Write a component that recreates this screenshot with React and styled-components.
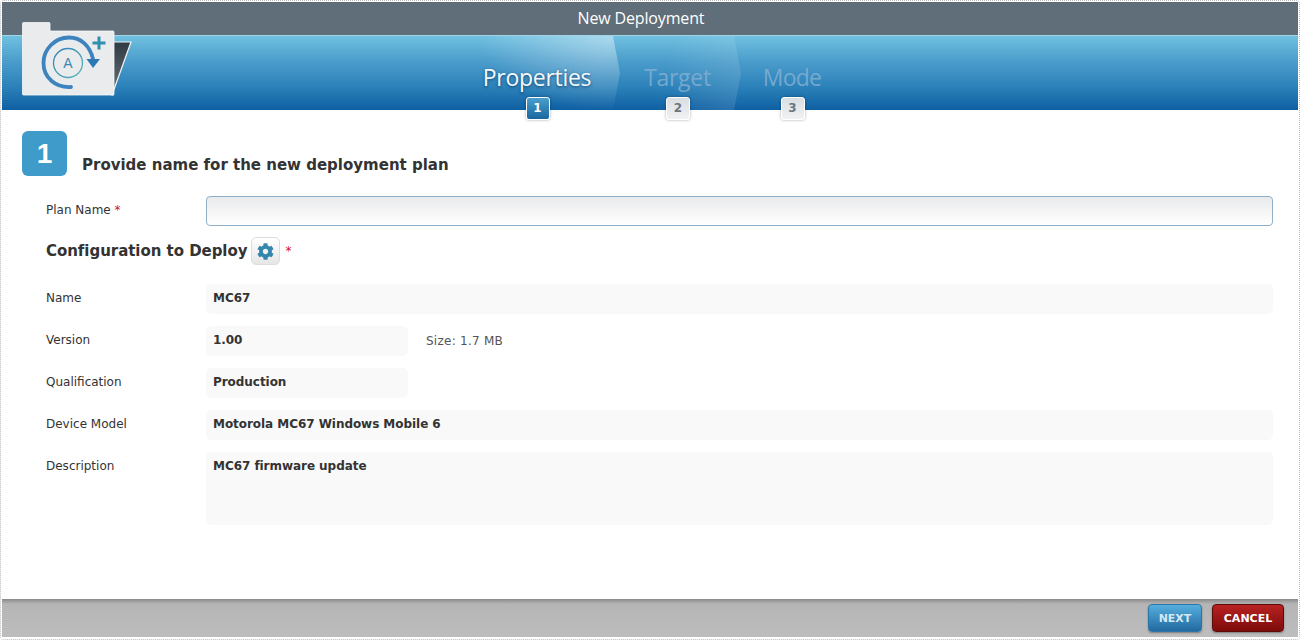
import React from 'react'
import styled, { createGlobalStyle } from 'styled-components';
import { FaCog } from 'react-icons/fa';

const GlobalStyle = createGlobalStyle`
  html, body {
    margin: 0;
    padding: 0;
    background: #fff;
  }
  body {
    font-family: "DejaVu Sans", Verdana, sans-serif;
    font-size: 12px;
    color: #333;
  }
`;

const steps = [
  { label: 'Properties', width: 160, state: 'active' },
  { label: 'Target', width: 127, state: 'next' },
  { label: 'Mode', width: 114, state: 'last' },
];

const rows = [
  { label: 'Name', value: 'MC67' },
  { label: 'Version', value: '1.00', short: true, note: 'Size: 1.7 MB' },
  { label: 'Qualification', value: 'Production', short: true },
  { label: 'Device Model', value: 'Motorola MC67 Windows Mobile 6' },
  { label: 'Description', value: 'MC67 firmware update', tall: true },
];

function FolderLogo() {
  return (
    <LogoSvg viewBox="0 0 112 76" width="112" height="76">
      <defs>
        <linearGradient id="flap" x1="0" y1="0" x2="0" y2="1">
          <stop offset="0" stopColor="#2f3a44" />
          <stop offset="1" stopColor="#6c7378" />
        </linearGradient>
        <linearGradient id="ring" x1="0" y1="0" x2="1" y2="1">
          <stop offset="0" stopColor="#2f7fb8" />
          <stop offset="1" stopColor="#5bb8b4" />
        </linearGradient>
      </defs>
      <path d="M91 20 L109 20 L90 73 L91 73 Z" fill="url(#flap)" stroke="#f2f4f5" strokeWidth="1.2" />
      <path d="M0.5 1.5 Q0.5 0.5 1.5 0.5 L27 0.5 Q28 0.5 28 1.5 L28 9 L91 9 Q92 9 92 10 L92 72 Q92 73 91 73 L1.5 73 Q0.5 73 0.5 72 Z" fill="#e9ebed" stroke="#f6f7f8" strokeWidth="0.8" />
      <path d="M49 65 C34 66 21.5 56 21.5 41 C21.5 27 33 15.5 47 15.5 C59 15.5 68 24 71 37" fill="none" stroke="#3d83bd" strokeWidth="3.8" strokeLinecap="round" />
      <path d="M64.5 37 L78 37 L71 46 Z" fill="#2b78b4" />
      <circle cx="46" cy="41" r="14.5" fill="none" stroke="url(#ring)" strokeWidth="1.3" />
      <text x="46" y="46" textAnchor="middle" fontSize="14" fontFamily="Liberation Sans, sans-serif" fill="#3a87b5">A</text>
      <path d="M70.5 21 H83.5 M77 14.5 V27.5" stroke="#2f8fb0" strokeWidth="3" fill="none" />
    </LogoSvg>
  )
}

function App() {
  return (
    <Page>
      <GlobalStyle />
      <TitleBar>New Deployment</TitleBar>
      <Banner>
        <FolderLogo />
        <Steps>
          {steps.map((step, i) => (
            <Step key={step.label} $width={step.width} $state={step.state}>
              <StepLabel $state={step.state}>
                {step.label}
                <StepBadge $state={step.state}>{i + 1}</StepBadge>
              </StepLabel>
            </Step>
          ))}
        </Steps>
      </Banner>
      <Content>
        <Heading>
          <NumberTile>1</NumberTile>
          <HeadingText>Provide name for the new deployment plan</HeadingText>
        </Heading>
        <PlanRow>
          <Label>Plan Name <Req>*</Req></Label>
          <PlanInput />
        </PlanRow>
        <ConfigHeading>
          <ConfigTitle>Configuration to Deploy</ConfigTitle>
          <GearButton><FaCog size={17} /></GearButton>
          <Req>*</Req>
        </ConfigHeading>
        <Rows>
          {rows.map(row => (
            <Row key={row.label}>
              <RowLabel>{row.label}</RowLabel>
              <Value $short={row.short} $tall={row.tall}>{row.value}</Value>
              {row.note && <Note>{row.note}</Note>}
            </Row>
          ))}
        </Rows>
      </Content>
      <Footer>
        <NextButton>NEXT</NextButton>
        <CancelButton>CANCEL</CancelButton>
      </Footer>
    </Page>
  )
}

export default App

const stepFills = {
  active: 'radial-gradient(ellipse 135px 75px at 96% 0%, rgba(255,255,255,0.42), rgba(255,255,255,0.14) 65%, rgba(255,255,255,0) 100%)',
  next: 'linear-gradient(100deg, rgba(255,255,255,0) 40%, rgba(255,255,255,0.12))',
  last: 'none',
};

const Page = styled.div`
  box-sizing: border-box;
  width: 1300px;
  height: 640px;
  padding: 1px 1px 2px 1px;
  border: 1px dotted #bbb;
  border-radius: 4px;
  display: flex;
  flex-direction: column;
  overflow: hidden;
`;

const TitleBar = styled.div`
  height: 33px;
  flex: none;
  padding-right: 18px;
  background: #5f6e79;
  color: #fff;
  font-family: "Open Sans", sans-serif;
  font-size: 16px;
  letter-spacing: -0.15px;
  line-height: 32px;
  text-align: center;
`;

const Banner = styled.div`
  position: relative;
  flex: none;
  height: 75px;
  box-sizing: border-box;
  border-top: 1px solid #9fd3e8;
  background: linear-gradient(to bottom, #70c0e0 0%, #4a9ccb 35%, #2a80b8 70%, #0f5fa3 100%);
  padding-left: 458px;
`;

const LogoSvg = styled.svg`
  position: absolute;
  left: 20px;
  top: -14px;
`;

const Steps = styled.div`
  display: flex;
  height: 100%;
`;

const Step = styled.div`
  position: relative;
  width: ${p => p.$width}px;
  margin-right: -6px;
  display: flex;
  justify-content: center;
  padding-right: ${p => (p.$state === 'active' ? 6 : 0)}px;
  box-sizing: border-box;

  &::before {
    content: '';
    position: absolute;
    inset: 0;
    background: ${p => stepFills[p.$state]};
    clip-path: polygon(0 0, calc(100% - 7px) 0, 100% 50%, calc(100% - 7px) 100%, 0 100%);
  }
`;

const StepLabel = styled.span`
  position: relative;
  align-self: flex-start;
  font-family: "Open Sans", sans-serif;
  font-size: 23px;
  line-height: 30px;
  margin-top: 26px;
  letter-spacing: ${p => (p.$state === 'last' ? '-0.8px' : '-0.3px')};
  color: ${p => (p.$state === 'active' ? '#f2fafd' : 'rgba(130,175,210,0.85)')};
  text-shadow: ${p => (p.$state === 'active' ? '0 1px 3px rgba(0,40,80,0.7)' : 'none')};
`;

const StepBadge = styled.span`
  position: absolute;
  left: 50%;
  top: 35px;
  margin-left: -11.5px;
  width: 24px;
  height: 23px;
  box-sizing: border-box;
  border-radius: 3px;
  border: 1px solid #fff;
  box-shadow: 0 0 3px rgba(0,0,0,0.35);
  font-family: "DejaVu Sans", Verdana, sans-serif;
  font-size: 12px;
  font-weight: bold;
  letter-spacing: 0;
  line-height: 21px;
  text-align: center;
  text-shadow: none;
  color: ${p => (p.$state === 'active' ? '#fff' : '#6b7680')};
  background: ${p => (p.$state === 'active' ? 'linear-gradient(#4a9fcb, #1a669f)' : 'linear-gradient(#d8dee3, #f1f2f3)')};
`;

const Content = styled.div`
  flex: 1;
  padding: 21px 25px 0 20px;
`;

const Heading = styled.div`
  display: flex;
  align-items: flex-end;
  gap: 15px;
`;

const NumberTile = styled.div`
  width: 45px;
  height: 45px;
  border-radius: 6px;
  background: #3f9bc9;
  color: #fff;
  font-family: "Liberation Sans", sans-serif;
  font-size: 28px;
  font-weight: bold;
  line-height: 45px;
  text-align: center;
`;

const HeadingText = styled.h2`
  margin: 0 0 1px;
  font-size: 15px;
  font-weight: 600;
  line-height: 20px;
  color: #333;
`;

const PlanRow = styled.div`
  display: flex;
  align-items: center;
  margin-top: 20px;
  padding-left: 24px;
  height: 30px;
`;

const Label = styled.label`
  width: 160px;
  flex: none;
  padding-bottom: 2px;
`;

const Req = styled.span`
  color: #d0112b;
`;

const PlanInput = styled.input`
  flex: 1;
  height: 30px;
  box-sizing: border-box;
  border: 1px solid #8fb0c8;
  border-radius: 4px;
  background: linear-gradient(#e9eaeb, #fff);
  outline: none;
`;

const ConfigHeading = styled.div`
  display: flex;
  align-items: center;
  margin-top: 10px;
  padding-left: 24px;
  height: 30px;
`;

const ConfigTitle = styled.h3`
  margin: 0 4px 0 0;
  font-size: 15px;
  font-weight: bold;
  letter-spacing: -0.04px;
  color: #333;
`;

const GearButton = styled.button`
  width: 29px;
  height: 28px;
  padding: 0;
  margin-right: 5px;
  border: 1px solid #ddd;
  border-radius: 5px;
  background: linear-gradient(#fff, #e6e6e6);
  color: #3585ad;
  display: flex;
  align-items: center;
  justify-content: center;
`;

const Rows = styled.div`
  margin-top: 18px;
  padding-left: 24px;
  display: flex;
  flex-direction: column;
  gap: 12px;
`;

const Row = styled.div`
  display: flex;
  align-items: flex-start;
`;

const RowLabel = styled.div`
  width: 160px;
  flex: none;
  line-height: 28px;
`;

const Value = styled.div`
  box-sizing: border-box;
  ${p => (p.$short ? 'width: 202px;' : 'flex: 1;')}
  height: ${p => (p.$tall ? 73 : 30)}px;
  padding: 0 7px;
  border-radius: 5px;
  background: #f9f9f9;
  font-weight: bold;
  letter-spacing: -0.05px;
  line-height: 28px;
`;

const Note = styled.div`
  margin-left: 18px;
  letter-spacing: 0.25px;
  color: #555;
  line-height: 30px;
`;

const Footer = styled.div`
  flex: none;
  height: 38px;
  box-sizing: border-box;
  padding: 5px 14px 0 0;
  display: flex;
  justify-content: flex-end;
  gap: 10px;
  background: linear-gradient(#8a8a8a 0, #b5b5b5 5px, #bdbdbd 100%);
`;

const FooterButton = styled.button`
  height: 28px;
  border-radius: 4px;
  color: #fff;
  font-family: "DejaVu Sans", Verdana, sans-serif;
  font-size: 11px;
  font-weight: bold;
  padding: 1px 0 0;
  box-shadow: 0 1px 2px rgba(0,0,0,0.35);
`;

const NextButton = styled(FooterButton)`
  width: 54px;
  border: 1px solid #2a76a6;
  background: linear-gradient(#55aede, #22699f);
  color: #d5e8f3;
`;

const CancelButton = styled(FooterButton)`
  width: 72px;
  border: 1px solid #5d0a0a;
  background: linear-gradient(#b82222, #7e0b0b);
`;
